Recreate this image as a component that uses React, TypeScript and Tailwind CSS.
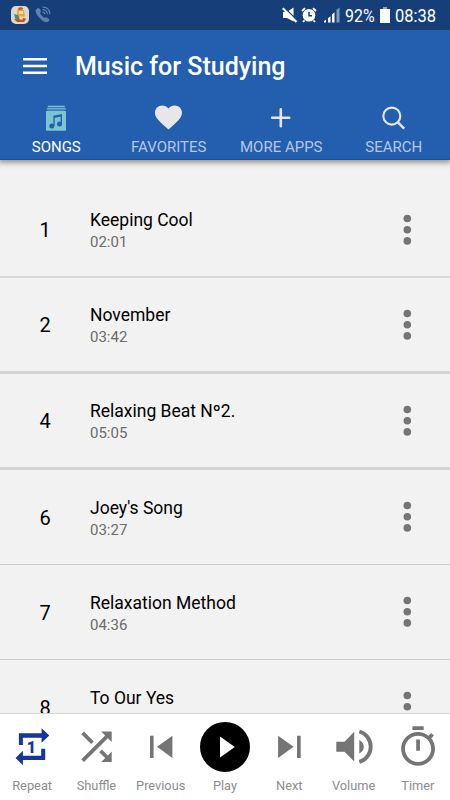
import type { ReactNode } from 'react';

interface Song {
    number: number;
    title: string;
    duration?: string;
    rowClass: string;
}

const songs: Song[] = [
    { number: 1, title: 'Keeping Cool', duration: '02:01', rowClass: 'h-[95px] border-b-2 border-[#d9d9d9]' },
    { number: 2, title: 'November', duration: '03:42', rowClass: 'h-24 border-b-3 border-[#d3d3d3]' },
    { number: 4, title: 'Relaxing Beat Nº2.', duration: '05:05', rowClass: 'h-24 border-b-3 border-[#d3d3d3]' },
    { number: 6, title: "Joey's Song", duration: '03:27', rowClass: 'h-[95px] border-b border-[#cbcbcb]' },
    { number: 7, title: 'Relaxation Method', duration: '04:36', rowClass: 'h-[95px] border-b border-[#cbcbcb]' },
    { number: 8, title: 'To Our Yes', rowClass: 'h-[94px]' },
];

function StatusBar() {
    return (
        <div className="flex h-[30px] shrink-0 items-center bg-[#163f7a] pl-[11px] pr-[14px] text-white">
            <svg className="h-[18px] w-[18px]" viewBox="0 0 18 18">
                <rect width="18" height="18" rx="5" fill="#dcd8d0" />
                <path d="M6 5c0-3 6-4 7 0l1 5-4 3-4-3z" fill="#f2a23c" />
                <path d="M7 2c2-1.500 5-1 5 1l-4 1z" fill="#c8501e" />
                <path d="M8 5h4v3H8z" fill="#fbe3bd" />
                <path d="M3 8l4 1 2 4-5-1z" fill="#2a9a8c" />
                <path d="M3 13c3-1 9-2 12 0l-2 3H6z" fill="#c4541f" />
                <path d="M9 10l4 1-2 3-3-1z" fill="#f4d7a4" />
            </svg>
            <svg className="ml-[5px] h-[18px] w-[18px]" viewBox="0 0 18 18" fill="none" stroke="#5f81b1">
                <path
                    d="M3.200 2.600c1-.9 1.900-.7 2.500.2l1 1.800c.5.900.2 1.500-.6 2.200-.5.500 3.500 5.500 4.500 5 .8-.5 1.500-.7 2.200-.1l2 1.300c.8.600.7 1.500-.1 2.200-1.700 1.500-4 1-6.300-.7C5.600 12.300 2.500 8.700 1.700 6c-.4-1.500.2-2.600 1.500-3.400z"
                    fill="#5f81b1"
                    stroke="none"
                />
                <path d="M8.500 1.200c4.200-.2 7 2.600 7.500 7M8.500 3.700c2.800 0 4.500 1.600 5 4.500M8.500 6.100c1.500 0 2.300.8 2.500 2.100" strokeWidth="1.200" />
            </svg>
            <div className="ml-auto flex items-center">
                <svg className="h-4 w-4" viewBox="0 0 16 16" fill="white">
                    <path d="M1 5h4l6.500-4.500v14L5 11H1z" />
                    <path d="M1.500 0L16 14" stroke="#163f7a" strokeWidth="1.500" />
                    <path d="M.8 1.200L14.500 14.900" stroke="white" strokeWidth="2.100" />
                </svg>
                <svg className="ml-[3px] h-4 w-4" viewBox="0 0 16 16" fill="none" stroke="white">
                    <circle cx="8" cy="8.300" r="6.300" fill="white" stroke="none" />
                    <path d="M1 4L4 1.200M15 4L12 1.200M3.500 13.300L2 15M12.500 13.300L14 15" strokeWidth="1.800" />
                    <path d="M8 4.800v4h3" stroke="#163f7a" strokeWidth="1.500" />
                </svg>
                <svg className="ml-[7px] h-4 w-4" viewBox="0 0 16 16" fill="white">
                    <path d="M0 15.500v-1.500l2-1.200v2.700zM4 15.500v-4.200l2.500-2v6.200zM8 15.500V7.500l2.500-2.300v10.300z" />
                    <path d="M12.500 15.500V3L15.500 .5v15z" fill="#7d9ac2" />
                </svg>
                <span className="ml-[5px] mt-0.5 w-[30px] origin-left scale-x-[0.84] text-[19px] leading-[30px]">92%</span>
                <svg className="ml-[5px] h-4 w-[10px]" viewBox="0 0 10 16" fill="white">
                    <path d="M3 0h4v2H3z" fill="#8da7cb" />
                    <path d="M0 2h10v14H0z" />
                </svg>
                <span className="ml-[5px] mt-0.5 w-[41px] origin-left scale-x-[0.87] text-[19px] leading-[30px]">08:38</span>
            </div>
        </div>
    );
}

function Tab({ label, active, children }: { label: string; active?: boolean; children: ReactNode }) {
    return (
        <button className="flex flex-1 flex-col items-center">
            <svg className="h-8 w-8" viewBox="0 0 32 32" fill="none">
                {children}
            </svg>
            <span className={`mt-[3px] whitespace-nowrap text-[15px] leading-5 ${active ? 'text-white' : 'text-[#b4c8e6]'}`}>
                {label}
            </span>
        </button>
    );
}

function Header() {
    return (
        <header className="z-10 flex h-[130px] shrink-0 flex-col border-b border-[#1a529f] bg-[#245eae] shadow-[0_2px_5px_1px_rgba(80,60,45,0.5)]">
            <div className="flex h-[72px] items-center pl-[23px]">
                <svg className="h-4 w-6" viewBox="0 0 24 16" fill="white">
                    <path d="M0 0h24v2.400H0zM0 6.800h24v2.400H0zM0 13.600h24V16H0z" />
                </svg>
                <h1 className="ml-7 mt-0.5 text-[25px] font-medium text-white">Music for Studying</h1>
            </div>
            <nav className="flex">
                <Tab label="SONGS" active>
                    <path d="M7.800 4.500h17M6.800 6.900h19" stroke="#7cc4d2" strokeWidth="1.300" />
                    <rect x="6" y="8.700" width="20" height="20" rx="1.200" fill="#7cc4d2" />
                    <path d="M14 24V14.300l7.300-1.500v9.500M14 15.300l7.300-1.500" stroke="#245eae" strokeWidth="1.300" />
                    <circle cx="11.800" cy="24" r="2.500" fill="#245eae" />
                    <circle cx="19.500" cy="22" r="2.500" fill="#245eae" />
                </Tab>
                <Tab label="FAVORITES">
                    <path
                        d="M15.500 27.500l-2-1.800C6.500 19.500 1.900 15.900 1.900 10.800 1.900 6.700 5.200 3.500 9.300 3.500c2.300 0 4.600 1.100 6.200 2.900 1.500-1.800 3.800-2.900 6.200-2.900 4.100 0 7.300 3.200 7.300 7.300 0 5.100-4.500 8.700-11.500 14.900z"
                        fill="#e8e6e9"
                    />
                </Tab>
                <Tab label="MORE APPS">
                    <path d="M15.800 7.200v17M7.200 15.700h17" stroke="#e8e6e9" strokeWidth="2.600" strokeLinecap="round" />
                </Tab>
                <Tab label="SEARCH">
                    <circle cx="13.800" cy="14.100" r="8.500" stroke="#e8e6e9" strokeWidth="2.100" />
                    <path d="M19.900 20.300l6.300 6.300" stroke="#e8e6e9" strokeWidth="2.400" />
                </Tab>
            </nav>
        </header>
    );
}

function SongRow({ song }: { song: Song }) {
    return (
        <li className={`flex shrink-0 items-center ${song.rowClass}`}>
            <span className="w-[90px] pt-px text-center text-[20px]">{song.number}</span>
            <div className="flex-1 pt-[3px]">
                <p className="text-[17.5px] leading-[22px]">{song.title}</p>
                <p className="h-[22px] text-[15px] leading-[22px] text-[#6b6b6b]">{song.duration}</p>
            </div>
            <button className="mr-[35px]" aria-label="Options">
                <svg className="h-8 w-4" viewBox="0 0 16 32" fill="#757575">
                    <circle cx="8.300" cy="4.500" r="3.800" />
                    <circle cx="8.300" cy="15.700" r="3.800" />
                    <circle cx="8.300" cy="26.900" r="3.800" />
                </svg>
            </button>
        </li>
    );
}

function Control({ label, children }: { label: string; children: ReactNode }) {
    return (
        <button className="flex flex-1 flex-col items-center pt-[5px]">
            <svg className="h-14 w-14" viewBox="0 0 56 56" fill="#757575">
                {children}
            </svg>
            <span className="text-[12.8px] leading-[22px] text-[#8c8c8c]">{label}</span>
        </button>
    );
}

function Player() {
    return (
        <footer className="z-10 flex h-[87px] shrink-0 border-t border-[#d6d6d6] bg-white">
            <Control label="Repeat">
                <g fill="#15369c">
                    <path d="M14.900 26V14.300h22.700v-5l7.700 7.200-7.700 7.200v-5H18.900V26z" />
                    <path d="M41.200 29.700V41H18.900v5.300l-7.300-7.300 7.300-7.300v5h18.300v-7z" />
                    <text x="27.300" y="33.500" textAnchor="middle" fontSize="16" fontWeight="900">1</text>
                </g>
            </Control>
            <Control label="Shuffle">
                <g transform="translate(5.700 5) scale(1.900)">
                    <path d="M10.590 9.170L5.410 4 4 5.410l5.170 5.170 1.420-1.410zM14.500 4l2.040 2.040L4 18.590 5.410 20 17.960 7.460 20 9.500V4h-5.500zm.33 9.410l-1.410 1.410 3.130 3.130L14.500 20H20v-5.500l-2.040 2.040-3.130-3.130z" />
                </g>
            </Control>
            <Control label="Previous">
                <path d="M17 16.700h3.600V39H17zM39.400 16.700V39L24 27.800z" />
            </Control>
            <Control label="Play">
                <circle cx="28" cy="27.900" r="25" fill="black" />
                <path d="M23 17.500v21l14.800-10.500z" fill="white" />
            </Control>
            <Control label="Next">
                <path d="M17.100 16.700V39l15.500-11.200zM36 16.700h3.700V39H36z" />
            </Control>
            <Control label="Volume">
                <path d="M10.300 22.700h8.200l9.700-9.900v29.600l-9.700-9.700h-8.200zM33.300 21c2.700 1.300 4.500 3.800 4.500 6.800s-1.800 5.500-4.500 6.800z" />
                <path d="M33.300 12.500c6.600 1.700 11.400 7.900 11.400 15.200s-4.800 13.500-11.400 15.200" fill="none" stroke="#757575" strokeWidth="3.800" />
            </Control>
            <Control label="Timer">
                <g transform="translate(5.500 5.400) scale(1.880)">
                    <path d="M15 1H9v2h6V1zm-4 13h2V8h-2v6zm8.030-6.610l1.420-1.420c-.43-.51-.9-.99-1.410-1.410l-1.420 1.420C16.070 4.740 14.120 4 12 4c-4.970 0-9 4.030-9 9s4.020 9 9 9 9-4.030 9-9c0-2.120-.74-4.070-1.970-5.610zM12 20c-3.870 0-7-3.130-7-7s3.130-7 7-7 7 3.130 7 7-3.130 7-7 7z" />
                </g>
            </Control>
        </footer>
    );
}

export default function App() {
    return (
        <div className="flex h-[800px] w-[450px] flex-col overflow-hidden bg-[#f2f2f2] font-['Roboto',sans-serif] text-black">
            <StatusBar />
            <Header />
            <ul className="flex min-h-0 flex-1 flex-col overflow-hidden pt-[23px]">
                {songs.map((song) => (
                    <SongRow key={song.number} song={song} />
                ))}
            </ul>
            <Player />
        </div>
    );
}
